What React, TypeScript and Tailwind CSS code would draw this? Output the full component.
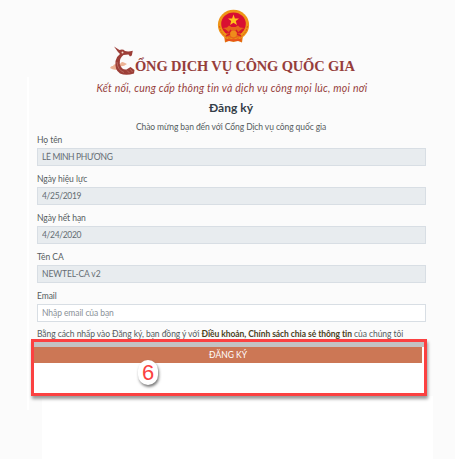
const fields = [
  { label: 'Họ tên', value: 'LÊ MINH PHƯƠNG' },
  { label: 'Ngày hiệu lực', value: '4/25/2019' },
  { label: 'Ngày hết hạn', value: '4/24/2020' },
  { label: 'Tên CA', value: 'NEWTEL-CA v2' },
  { label: 'Email', value: '' },
];

function Emblem() {
  return (
    <svg className="h-[35px] w-[33px]" viewBox="0 0 33 35">
      <path d="M7 26 L8 33.500 L12 32 L16.500 33 L21 32 L25 33.500 L26 26Z" fill="#e3700f" />
      <ellipse cx="16.500" cy="16" rx="15.600" ry="15.200" fill="#ee9517" />
      <ellipse cx="16.500" cy="15" rx="12.300" ry="11.500" fill="#d90f32" />
      <path d="M16.500 5.500 L17.900 9.400 L22 9.600 L18.800 12.100 L19.900 16 L16.500 13.700 L13.100 16 L14.200 12.100 L11 9.600 L15.100 9.400Z" fill="#ffc31c" />
      <path d="M6 19 L10 18.500 L12 16.500 L14.500 18 L18.500 18 L21 16.500 L23 18.500 L27 19 L22 23 L24 27 L16.500 30 L9 27 L11 23Z" fill="#e7661a" />
      <path d="M7 20 L12 24 L14 21 M26 20 L21 24 L19 21 M9 27 L13 25 M24 27 L20 25" fill="none" stroke="#d61f2a" strokeWidth="1.500" />
      <circle cx="16.500" cy="25" r="3.200" fill="#ef8c1b" />
      <path d="M2.500 17 Q4 27 14 30 M30.500 17 Q29 27 19 30" fill="none" stroke="#dc5b17" strokeWidth="1" strokeDasharray="2 1" />
      <path d="M9 31 H24" stroke="#e84a1c" strokeWidth="1.500" />
    </svg>
  );
}

function BirdInitial() {
  return (
    <svg className="h-[30px] w-[26px] shrink-0" viewBox="0 0 26 30">
      <path d="M0 22 Q1 19.500 3 20 Q4 17 7 19 L9 23 Q4 25 0 22Z M10 18 Q11.500 15 14 16.500 L17 18 Q13 21 10 20Z" fill="#ecb395" />
      <path d="M4 0.500 L9.500 4 Q13 2.800 15 5 Q18 6 22.800 4.800 L21.800 9.500 L20 10.500 L18.500 8.500 L13.500 9 Q9.300 12 9.800 18 Q11.500 24 16.500 23.500 L20.500 21 L24.500 24 L24 27.500 Q16 30 10 27.500 Q4.500 24 5.500 15 Q6.500 10.500 10 8 L8 6Z" fill="#9c3e37" />
      <circle cx="12.500" cy="6.500" r="1" fill="#f3d6c7" />
      <path d="M7 16 Q7.500 24 14 26.500 M17 24.500 L19.500 27 M20 23 L22.500 26" fill="none" stroke="#c78378" strokeWidth=".6" />
    </svg>
  );
}

export default function App() {
  return (
    <div className="relative flex h-[459px] w-[455px] flex-col overflow-hidden bg-[#fbfbfb] font-['Lato','Noto_Sans',sans-serif] text-[#555b60]">
      <header className="flex flex-col items-center pl-[11px]">
        <div className="mt-[9px] h-[37px]"><Emblem /></div>
        <div className="flex h-[32px] w-[246px] items-start whitespace-nowrap text-[#963e3b]">
          <BirdInitial />
          <h1 className="-ml-px mt-[8px] font-['Liberation_Serif',serif] text-[14.500px] leading-[24px] font-bold -tracking-[.17px]">ỔNG DỊCH VỤ CÔNG QUỐC GIA</h1>
        </div>
        <p className="mt-[2px] mr-[2px] h-[16px] text-[10.500px] leading-[16px] tracking-[.24px] whitespace-nowrap italic text-[#963e3b]">Kết nối, cung cấp thông tin và dịch vụ công mọi lúc, mọi nơi</p>
        <h2 className="mt-[2px] mr-[4px] h-[20px] text-[12px] leading-[20px] font-bold text-[#343e47]">Đăng ký</h2>
        <p className="mt-[2px] mr-[4px] h-[15px] text-[8.500px] leading-[15px] tracking-[-.09px] whitespace-nowrap">Chào mừng bạn đến với Cổng Dịch vụ công quốc gia</p>
      </header>
      <div className="relative ml-[27px] flex flex-1 before:absolute before:-top-[58px] before:left-0 before:h-[333px] before:w-[2px] before:bg-white">
        <main className="ml-[2px] flex w-full flex-col">
          <form className="ml-[8px] w-[389px]" onSubmit={(e) => e.preventDefault()}>
            {fields.map((field) => (
              <label key={field.label} className="block h-[39px] text-[8.500px] leading-[11px] tracking-[-.05px]">
                <span className="block h-[13px]">{field.label}</span>
                <input
                  disabled={!!field.value}
                  defaultValue={field.value}
                  placeholder="Nhập email của bạn"
                  className={`block h-[18px] w-full border border-[#d8dee4] bg-white px-[4px] text-[8.500px] leading-[14px] text-[#646c73] placeholder:text-[#8a9198] disabled:bg-[#e8ecef] ${field.label === 'Họ tên' || field.value.startsWith('4/') ? 'tracking-[-.35px]' : 'tracking-[-.08px]'}`}
                />
              </label>
            ))}
            <p className="h-[9px] text-[8.500px] leading-[9px] tracking-[-.06px] whitespace-nowrap">
              Bằng cách nhấp vào Đăng ký, bạn đồng ý với <strong className="text-[#4c421d]">Điều khoản, Chính sách chia sẻ thông tin</strong> của chúng tôi
            </p>
          </form>
          <section className="relative z-10 ml-[2px] h-[57px] w-[396px] shrink-0 border-[3px] border-[#fb4141] bg-white shadow-[1px_3px_3px_#9b9b9b]">
            <div className="h-[5px] bg-[#c3c3c3]" />
            <button className="block h-[16px] w-[388px] bg-[#cc7755] text-[8.500px] leading-[16px] text-white">ĐĂNG KÝ</button>
            <span className="absolute top-[18px] left-[104px] flex h-[25px] w-[20px] items-center justify-center rounded-full bg-white font-['Liberation_Sans',sans-serif] text-[22px] text-[#fb4141] shadow-[1px_2px_3px_#777]">6</span>
          </section>
          <div className="ml-[13px] w-[391px] flex-1 bg-white" />
        </main>
      </div>
    </div>
  );
}
